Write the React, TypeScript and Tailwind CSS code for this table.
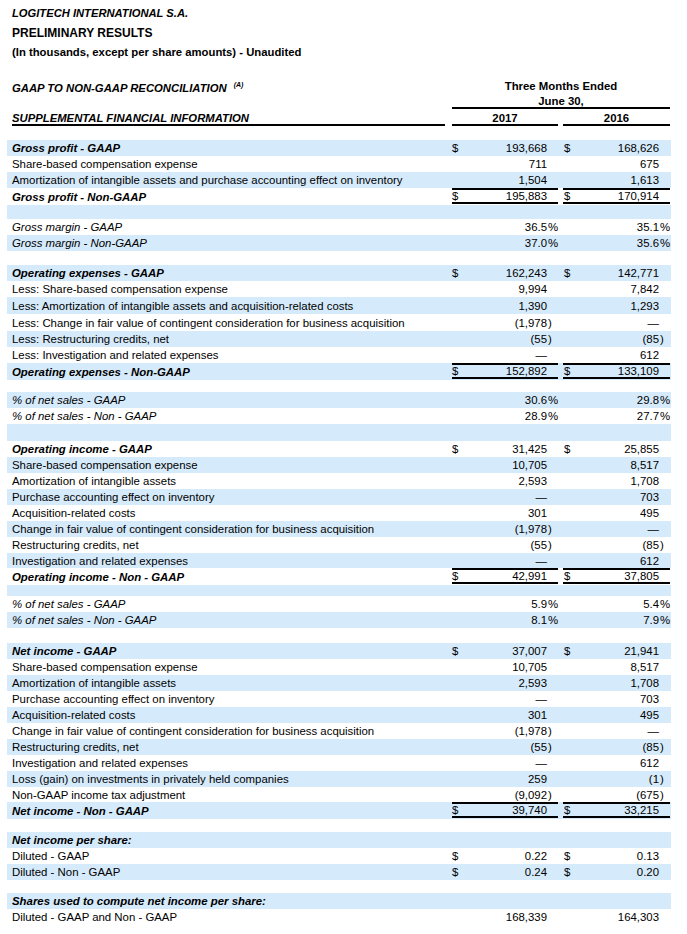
import React from "react";

type Row = {
  label?: string;
  kind?: "head" | "italic" | "plain";
  a?: string;
  b?: string;
  dollar?: boolean;
  total?: boolean;
  h: string;
};

const SHADE = "bg-[#d5eafb]";

// Heights follow the PDF export, which is not quite regular
const rows: Row[] = [
  { label: "Gross profit - GAAP", kind: "head", a: "193,668", b: "168,626", dollar: true, h: "h-[16px]" },
  { label: "Share-based compensation expense", a: "711", b: "675", h: "h-[16px]" },
  { label: "Amortization of intangible assets and purchase accounting effect on inventory", a: "1,504", b: "1,613", h: "h-[16px]" },
  { label: "Gross profit - Non-GAAP", kind: "head", a: "195,883", b: "170,914", dollar: true, total: true, h: "h-[17px]" },
  { h: "h-[14px]" },
  { label: "Gross margin - GAAP", kind: "italic", a: "36.5%", b: "35.1%", h: "h-[16px]" },
  { label: "Gross margin - Non-GAAP", kind: "italic", a: "37.0%", b: "35.6%", h: "h-[16px]" },
  { h: "h-[14px]" },
  { label: "Operating expenses - GAAP", kind: "head", a: "162,243", b: "142,771", dollar: true, h: "h-[16px]" },
  { label: "Less: Share-based compensation expense", a: "9,994", b: "7,842", h: "h-[16px]" },
  { label: "Less: Amortization of intangible assets and acquisition-related costs", a: "1,390", b: "1,293", h: "h-[17px]" },
  { label: "Less: Change in fair value of contingent consideration for business acquisition", a: "(1,978)", b: "—", h: "h-[17px]" },
  { label: "Less: Restructuring credits, net", a: "(55)", b: "(85)", h: "h-[16px]" },
  { label: "Less: Investigation and related expenses", a: "—", b: "612", h: "h-[16px]" },
  { label: "Operating expenses - Non-GAAP", kind: "head", a: "152,892", b: "133,109", dollar: true, total: true, h: "h-[17px]" },
  { h: "h-[12px]" },
  { label: "% of net sales - GAAP", kind: "italic", a: "30.6%", b: "29.8%", h: "h-[16px]" },
  { label: "% of net sales - Non - GAAP", kind: "italic", a: "28.9%", b: "27.7%", h: "h-[16px]" },
  { h: "h-[17px]" },
  { label: "Operating income - GAAP", kind: "head", a: "31,425", b: "25,855", dollar: true, h: "h-[16px]" },
  { label: "Share-based compensation expense", a: "10,705", b: "8,517", h: "h-[16px]" },
  { label: "Amortization of intangible assets", a: "2,593", b: "1,708", h: "h-[16px]" },
  { label: "Purchase accounting effect on inventory", a: "—", b: "703", h: "h-[16px]" },
  { label: "Acquisition-related costs", a: "301", b: "495", h: "h-[16px]" },
  { label: "Change in fair value of contingent consideration for business acquisition", a: "(1,978)", b: "—", h: "h-[16px]" },
  { label: "Restructuring credits, net", a: "(55)", b: "(85)", h: "h-[16px]" },
  { label: "Investigation and related expenses", a: "—", b: "612", h: "h-[15px]" },
  { label: "Operating income - Non - GAAP", kind: "head", a: "42,991", b: "37,805", dollar: true, total: true, h: "h-[17px]" },
  { h: "h-[11px]" },
  { label: "% of net sales - GAAP", kind: "italic", a: "5.9%", b: "5.4%", h: "h-[16px]" },
  { label: "% of net sales - Non - GAAP", kind: "italic", a: "8.1%", b: "7.9%", h: "h-[16px]" },
  { h: "h-[15px]" },
  { label: "Net income - GAAP", kind: "head", a: "37,007", b: "21,941", dollar: true, h: "h-[16px]" },
  { label: "Share-based compensation expense", a: "10,705", b: "8,517", h: "h-[16px]" },
  { label: "Amortization of intangible assets", a: "2,593", b: "1,708", h: "h-[16px]" },
  { label: "Purchase accounting effect on inventory", a: "—", b: "703", h: "h-[16px]" },
  { label: "Acquisition-related costs", a: "301", b: "495", h: "h-[16px]" },
  { label: "Change in fair value of contingent consideration for business acquisition", a: "(1,978)", b: "—", h: "h-[16px]" },
  { label: "Restructuring credits, net", a: "(55)", b: "(85)", h: "h-[16px]" },
  { label: "Investigation and related expenses", a: "—", b: "612", h: "h-[16px]" },
  { label: "Loss (gain) on investments in privately held companies", a: "259", b: "(1)", h: "h-[16px]" },
  { label: "Non-GAAP income tax adjustment", a: "(9,092)", b: "(675)", h: "h-[15px]" },
  { label: "Net income - Non - GAAP", kind: "head", a: "39,740", b: "33,215", dollar: true, total: true, h: "h-[17px]" },
  { h: "h-[13px]" },
  { label: "Net income per share:", kind: "head", h: "h-[16px]" },
  { label: "Diluted - GAAP", a: "0.22", b: "0.13", dollar: true, h: "h-[16px]" },
  { label: "Diluted - Non - GAAP", a: "0.24", b: "0.20", dollar: true, h: "h-[16px]" },
  { h: "h-[13px]" },
  { label: "Shares used to compute net income per share:", kind: "head", h: "h-[16px]" },
  { label: "Diluted - GAAP and Non - GAAP", a: "168,339", b: "164,303", h: "h-[16px]" },
];

// "(1,978)" and "36.5%" hang their last character past the digit column
function split(v: string): [string, string] {
  if (v.endsWith("%") || v.endsWith(")")) return [v.slice(0, -1), v.slice(-1)];
  return [v, ""];
}

function Amount({ value, dollar, total, first }: { value?: string; dollar?: boolean; total?: boolean; first?: boolean }) {
  const [num, suffix] = split(value ?? "");
  return (
    <div
      className={`flex ${first ? "w-[106px]" : "w-[107px] ml-[5px] pl-[1px]"} ${
        total ? "h-[16px] self-start items-center border-t-2 border-b-2 border-black" : "h-full items-center"
      }`}
    >
      <span className="w-[10px]">{dollar ? "$" : ""}</span>
      <span className="flex-1 text-right">{num}</span>
      <span className="w-[11px] pl-[1px]">{suffix}</span>
    </div>
  );
}

function TableRow({ row, index }: { row: Row; index: number }) {
  const labelClass =
    row.kind === "head" ? "font-bold italic" : row.kind === "italic" ? "italic" : "";
  return (
    <div className={`flex ml-[7px] w-[664px] ${row.h} ${index % 2 === 0 ? SHADE : ""}`}>
      <div className={`flex items-center w-[438px] pl-[5px] whitespace-nowrap ${labelClass}`}>
        {row.label}
      </div>
      {row.label && (row.a || row.b) && (
        <div className="flex ml-[7px]">
          <Amount value={row.a} dollar={row.dollar} total={row.total} first />
          <Amount value={row.b} dollar={row.dollar} total={row.total} />
        </div>
      )}
    </div>
  );
}

export default function App() {
  return (
    <div
      className="w-[687px] h-[934px] bg-white text-black text-[11.4px] leading-[14px] overflow-hidden"
      style={{ fontFamily: "'Liberation Sans', Arial, sans-serif" }}
    >
      {/* Title block */}
      <div className="flex items-center h-[25px] pl-[12px] font-bold italic text-[11.2px]">
        LOGITECH INTERNATIONAL S.A.
      </div>
      <div className="flex items-center h-[15px] pl-[12px] font-bold text-[12px]">PRELIMINARY RESULTS</div>
      <div className="flex items-center h-[24px] pl-[12px] font-bold text-[11.3px]">
        (In thousands, except per share amounts) - Unaudited
      </div>
      <div className="h-[14px]" />

      {/* Column headings */}
      <div className="flex h-[16px] items-center">
        <div className="w-[452px] pl-[12px] font-bold italic text-[11.3px]">
          GAAP TO NON-GAAP RECONCILIATION
          <span className="ml-[7px] text-[7px] align-[5px]">(A)</span>
        </div>
        <div className="w-[218px] text-center font-bold">Three Months Ended</div>
      </div>
      <div className="flex h-[15px]">
        <div className="w-[452px]" />
        <div className="flex w-[218px] justify-center items-center border-b-2 border-black font-bold">
          June 30,
        </div>
      </div>
      <div className="flex h-[17px] font-bold leading-[12px]">
        <div className="flex items-end ml-[12px] w-[433px] border-b-2 border-black italic text-[11.3px]">
          SUPPLEMENTAL FINANCIAL INFORMATION
        </div>
        <div className="flex items-end justify-center ml-[7px] w-[106px] border-b-2 border-black">2017</div>
        <div className="flex items-end justify-center ml-[5px] w-[107px] border-b-2 border-black">2016</div>
      </div>
      <div className="h-[14px]" />

      {rows.map((row, i) => (
        <TableRow key={i} row={row} index={i} />
      ))}
    </div>
  );
}
